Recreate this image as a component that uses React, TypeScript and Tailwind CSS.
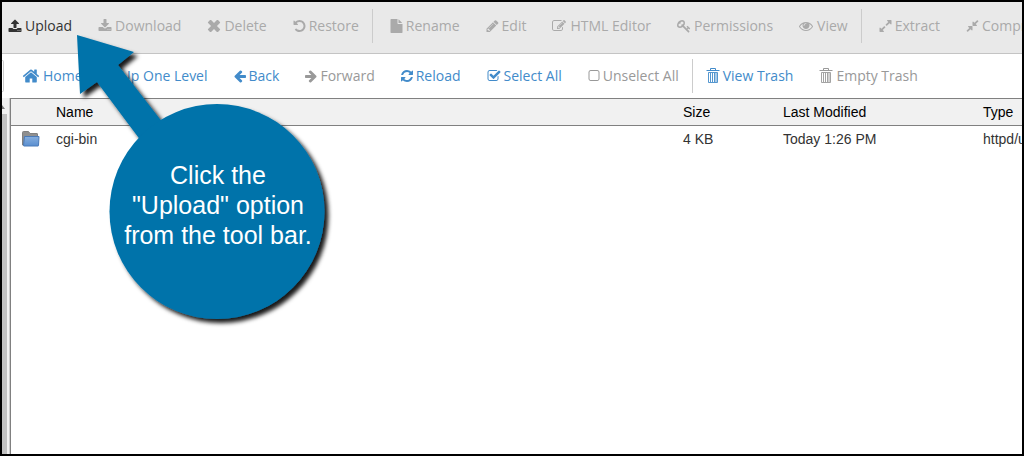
import type { ReactNode } from "react";
import clsx from "clsx";

// 1792-unit icon outlines
const icons = {
  upload:
    "M1344 1472q0-26-19-45t-45-19-45 19-19 45 19 45 45 19 45-19 19-45zm256 0q0-26-19-45t-45-19-45 19-19 45 19 45 45 19 45-19 19-45zm128-224v320q0 40-28 68t-68 28h-1472q-40 0-68-28t-28-68v-320q0-40 28-68t68-28h427q21 56 70.5 92t110.5 36h256q61 0 110.5-36t70.5-92h427q40 0 68 28t28 68zm-325-648q-17 40-59 40h-256v448q0 26-19 45t-45 19h-256q-26 0-45-19t-19-45v-448h-256q-42 0-59-40-17-39 14-69l448-448q18-19 45-19t45 19l448 448q31 30 14 69z",
  download:
    "M1344 1344q0-26-19-45t-45-19-45 19-19 45 19 45 45 19 45-19 19-45zm256 0q0-26-19-45t-45-19-45 19-19 45 19 45 45 19 45-19 19-45zm128-224v320q0 40-28 68t-68 28h-1472q-40 0-68-28t-28-68v-320q0-40 28-68t68-28h465l135 136q58 56 136 56t136-56l136-136h464q40 0 68 28t28 68zm-325-569q17 41-14 70l-448 448q-18 19-45 19t-45-19l-448-448q-31-29-14-70 17-39 59-39h256v-448q0-26 19-45t45-19h256q26 0 45 19t19 45v448h256q42 0 59 39z",
  times:
    "M1650 1406l-244 244q-28 28-68 28t-68-28l-374-374-374 374q-28 28-68 28t-68-28l-244-244q-28-28-28-68t28-68l374-374-374-374q-28-28-28-68t28-68l244-244q28-28 68-28t68 28l374 374 374-374q28-28 68-28t68 28l244 244q28 28 28 68t-28 68l-374 374 374 374q28 28 28 68t-28 68z",
  undo: "M1664 896q0 156-61 298t-164 245-245 164-298 61q-172 0-327-72.5t-264-204.5q-7-10-6.5-22.5t8.5-20.5l137-138q10-9 25-9 16 2 23 12 73 95 179 147t225 52q104 0 198.5-40.5t163.5-109.5 109.5-163.5 40.5-198.5-40.5-198.5-109.5-163.5-163.5-109.5-198.5-40.5q-98 0-188 35.5t-160 101.5l137 138q31 30 14 69-17 40-59 40h-448q-26 0-45-19t-19-45v-448q0-42 40-59 39-17 69 14l130 129q107-101 244.5-156.5t284.5-55.5q156 0 298 61t245 164 164 245 61 298z",
  file: "M1152 512v-472q22 14 36 28l408 408q14 14 28 36h-472zm-128 32q0 40 28 68t68 28h544v1056q0 40-28 68t-68 28h-1344q-40 0-68-28t-28-68v-1600q0-40 28-68t68-28h800v544z",
  pencil:
    "M491 1536l91-91-235-235-91 91v107h128v128h107zm523-928q0-22-22-22-10 0-17 7l-542 542q-7 7-7 17 0 22 22 22 10 0 17-7l542-542q7-7 7-17zm-54-192l416 416-832 832h-416v-416zm683 96q0 53-37 90l-166 166-416-416 166-165q36-38 90-38 53 0 91 38l235 234q37 39 37 91z",
  edit: "M888 1184l116-116-152-152-116 116v56h96v96h56zm440-720q-16-16-33 1l-350 350q-17 17-1 33t33-1l350-350q17-17 1-33zm80 594v190q0 119-84.5 203.5t-203.5 84.5h-832q-119 0-203.5-84.5t-84.5-203.5v-832q0-119 84.5-203.5t203.5-84.5h832q63 0 117 25 15 7 18 23 3 17-9 29l-49 49q-14 14-32 8-23-6-45-6h-832q-66 0-113 47t-47 113v832q0 66 47 113t113 47h832q66 0 113-47t47-113v-126q0-13 9-22l64-64q15-15 35-7t20 29zm-96-738l288 288-672 672h-288v-288zm444 132l-92 92-288-288 92-92q28-28 68-28t68 28l152 152q28 28 28 68t-28 68z",
  key: "M832 512q0-80-56-136t-136-56-136 56-56 136q0 42 19 83-41-19-83-19-80 0-136 56t-56 136 56 136 136 56 136-56 56-136q0-42-19-83 41 19 83 19 80 0 136-56t56-136zm851 704q0 17-49 66t-66 49q-9 0-28.5-16t-36.5-33-38.5-40-24.5-26l-96 96 220 220q28 28 28 68 0 42-39 81t-81 39q-40 0-68-28l-671-671q-176 131-365 131-163 0-265.5-102.5t-102.5-265.5q0-160 95-313t248-248 313-95q163 0 265.5 102.5t102.5 265.5q0 189-131 365l355 355 96-96q-3-3-26-24.5t-40-38.5-33-36.5-16-28.5q0-17 49-66t66-49q13 0 23 10 6 6 46 44.5t82 79.5 86.5 86 73 78 28.5 41z",
  eye: "M1664 960q-152-236-381-353 61 104 61 225 0 185-131.5 316.5t-316.5 131.5-316.5-131.5-131.5-316.5q0-121 61-225-229 117-381 353 133 205 333.5 326.5t434.5 121.5 434.5-121.5 333.5-326.5zm-720-384q0-20-14-34t-34-14q-125 0-214.5 89.5t-89.5 214.5q0 20 14 34t34 14 34-14 14-34q0-86 61-147t147-61q20 0 34-14t14-34zm848 384q0 34-20 69-140 230-376.5 368.5t-499.5 138.5-499.5-139-376.5-368q-20-35-20-69t20-69q140-229 376.5-368t499.5-139 499.5 139 376.5 368q20 35 20 69z",
  expand:
    "M883 1056q0 13-10 23l-332 332 144 144q19 19 19 45t-19 45-45 19h-448q-26 0-45-19t-19-45v-448q0-26 19-45t45-19 45 19l144 144 332-332q10-10 23-10t23 10l114 114q10 10 10 23zm781-864v448q0 26-19 45t-45 19-45-19l-144-144-332 332q-10 10-23 10t-23-10l-114-114q-10-10-10-23t10-23l332-332-144-144q-19-19-19-45t19-45 45-19h448q26 0 45 19t19 45z",
  compress:
    "M896 960v448q0 26-19 45t-45 19-45-19l-144-144-332 332q-10 10-23 10t-23-10l-114-114q-10-10-10-23t10-23l332-332-144-144q-19-19-19-45t19-45 45-19h448q26 0 45 19t19 45zm755-672q0 13-10 23l-332 332 144 144q19 19 19 45t-19 45-45 19h-448q-26 0-45-19t-19-45v-448q0-26 19-45t45-19 45 19l144 144 332-332q10-10 23-10t23 10l114 114q10 10 10 23z",
  home: "M1472 992v480q0 26-19 45t-45 19h-384v-384h-256v384h-384q-26 0-45-19t-19-45v-480q0-1 .5-3t.5-3l575-474 575 474q1 2 1 6zm223-69l-62 74q-8 9-21 11h-3q-13 0-21-7l-692-577-692 577q-12 8-24 7-13-2-21-11l-62-74q-8-10-7-23.5t11-21.5l719-599q32-26 76-26t76 26l244 204v-195q0-14 9-23t23-9h192q14 0 23 9t9 23v408l219 182q10 8 11 21.5t-7 23.5z",
  levelUp: "M700 256l-380 420h240v700h-340l240 260h640v-960h240z",
  left: "M1664 896v128q0 53-32.5 90.5t-84.5 37.5h-704l293 294q38 36 38 90t-38 90l-75 76q-37 37-90 37-52 0-91-37l-651-652q-37-37-37-90 0-52 37-91l651-650q38-38 91-38 52 0 90 38l75 74q38 38 38 91t-38 91l-293 293h704q52 0 84.5 37.5t32.5 90.5z",
  right:
    "M1600 960q0 54-37 91l-651 651q-39 37-91 37-51 0-90-37l-75-75q-38-38-38-91t38-91l293-293h-704q-52 0-84.5-37.5t-32.5-90.5v-128q0-53 32.5-90.5t84.5-37.5h704l-293-294q-38-36-38-90t38-90l75-75q38-38 90-38 53 0 91 38l651 651q37 35 37 90z",
  refresh:
    "M1639 1056q0 5-1 7-64 268-268 434.5t-478 166.5q-146 0-282.5-55t-243.5-157l-129 129q-19 19-45 19t-45-19-19-45v-448q0-26 19-45t45-19h448q26 0 45 19t19 45-19 45l-137 137q71 66 161 102t187 36q134 0 250-65t186-179q11-17 53-117 8-23 30-23h192q13 0 22.5 9.5t9.5 22.5zm25-800v448q0 26-19 45t-45 19h-448q-26 0-45-19t-19-45 19-45l138-138q-148-137-349-137-134 0-250 65t-186 179q-11 17-53 117-8 23-30 23h-199q-13 0-22.5-9.5t-9.5-22.5v-7q65-268 270-434.5t480-166.5q146 0 284 55.5t245 156.5l130-129q19-19 45-19t45 19 19 45z",
  checked:
    "M1472 930v318q0 119-84.5 203.5t-203.5 84.5h-832q-119 0-203.5-84.5t-84.5-203.5v-832q0-119 84.5-203.5t203.5-84.5h832q63 0 117 25 15 7 18 23 3 17-9 29l-49 49q-10 10-23 10-3 0-9-2-23-6-45-6h-832q-66 0-113 47t-47 113v832q0 66 47 113t113 47h832q66 0 113-47t47-113v-254q0-13 9-22l64-64q10-10 23-10 6 0 12 3 20 8 20 29zm231-489l-814 814q-24 24-57 24t-57-24l-430-430q-24-24-24-57t24-57l110-110q24-24 57-24t57 24l263 263 647-647q24-24 57-24t57 24l110 110q24 24 24 57t-24 57z",
  unchecked:
    "M1312 256h-832q-66 0-113 47t-47 113v832q0 66 47 113t113 47h832q66 0 113-47t47-113v-832q0-66-47-113t-113-47zm288 160v832q0 119-84.5 203.5t-203.5 84.5h-832q-119 0-203.5-84.5t-84.5-203.5v-832q0-119 84.5-203.5t203.5-84.5h832q119 0 203.5 84.5t84.5 203.5z",
};

type IconName = keyof typeof icons;

// glyphs advance by different widths, like an icon font
const iconSizes: Partial<Record<IconName, string>> = {
  home: "size-[18px]",
  levelUp: "h-[14px] w-[9px]",
  left: "h-[14px] w-[12px]",
  right: "h-[14px] w-[12px]",
  refresh: "h-[14px] w-[12px]",
  unchecked: "h-[14px] w-[12px]",
  undo: "h-[14px] w-[13px]",
  file: "h-[14px] w-[13px]",
  pencil: "h-[14px] w-[13px]",
  expand: "h-[14px] w-[13px]",
  compress: "h-[14px] w-[13px]",
  edit: "size-[14px] mr-px",
  eye: "size-[14px] mr-px",
};

function Icon({ name }: { name: IconName }) {
  return (
    <svg
      viewBox="0 0 1792 1792"
      preserveAspectRatio="xMidYMid slice"
      fill="currentColor"
      className={clsx("shrink-0", iconSizes[name] ?? "size-[14px]")}
    >
      <path d={icons[name]} />
    </svg>
  );
}

function TrashIcon() {
  return (
    <svg viewBox="0 0 14 16" fill="none" stroke="currentColor" className="h-4 w-[14px] shrink-0">
      <path d="M.5 2.5h13M4.500 2V.5h5V2" />
      <path d="M2.500 4.500h9v10h-9zM4.500 5v9M6.500 5v9M8.500 5v9M10 5v9" strokeWidth=".9" />
    </svg>
  );
}

function ToolButton({ icon, label, tone }: { icon: ReactNode; label: string; tone: "dark" | "muted" | "link" | "off" }) {
  return (
    <button
      disabled={tone === "muted" || tone === "off"}
      className={clsx(
        "flex shrink-0 items-center gap-[3px] px-[13px]",
        tone === "dark" && "text-[#333]",
        tone === "muted" && "text-[#aaa]",
        tone === "link" && "text-[#428bca]",
        tone === "off" && "text-[#999]"
      )}
    >
      {icon}
      {label}
    </button>
  );
}

function Divider() {
  return <div className="h-[34px] w-px shrink-0 bg-[#ccc]" />;
}

const fileActions: [IconName, string][][] = [
  [["upload", "Upload"], ["download", "Download"], ["times", "Delete"], ["undo", "Restore"]],
  [["file", "Rename"], ["pencil", "Edit"], ["edit", "HTML Editor"], ["key", "Permissions"], ["eye", "View"]],
  [["expand", "Extract"], ["compress", "Compress"]],
];

const navActions: [IconName, string][] = [
  ["home", "Home"],
  ["levelUp", "Up One Level"],
  ["left", "Back"],
  ["right", "Forward"],
  ["refresh", "Reload"],
  ["checked", "Select All"],
  ["unchecked", "Unselect All"],
];

function FolderIcon() {
  return (
    <svg viewBox="0 0 18 16" className="h-4 w-[18px]">
      <defs>
        <linearGradient id="folder" x1="0" y1="0" x2="0" y2="1">
          <stop offset="0" stopColor="#86aede" />
          <stop offset="1" stopColor="#5a8fd0" />
        </linearGradient>
      </defs>
      <path d="M.5 14V1.500Q.5.5 1.500.5h5l1.500 2h7q.5 0 .5.5v11z" fill="#8f8f8f" stroke="#808080" />
      <path d="M2.500 5.500h14.500l-.5 9q0 .5-.5.5H2q-.5 0-.5-.5z" fill="url(#folder)" stroke="#4a7ab8" />
    </svg>
  );
}

function Callout() {
  return (
    <div className="absolute top-[30px] left-[72px] h-[300px] w-[262px]">
      <svg viewBox="74 32 262 300" className="size-full overflow-visible fill-[#0073aa]">
        <defs>
          <filter id="callout-shadow" x="-10%" y="-10%" width="120%" height="120%">
            <feDropShadow dx="4" dy="4" stdDeviation="2" floodColor="#000" floodOpacity="0.9" />
          </filter>
        </defs>
        <g filter="url(#callout-shadow)">
          <path d="M77 35L134 52L118 65L170 132L150 153L97 82L80 94z" />
          <circle cx="217" cy="211.500" r="107.500" />
        </g>
      </svg>
      <p className="absolute inset-x-0 top-32 pl-[26px] text-center font-['Liberation_Sans',Arial,sans-serif] text-[25px] leading-[30px] whitespace-nowrap text-white">
        Click the
        <br />
        "Upload" option
        <br />
        from the tool bar.
      </p>
    </div>
  );
}

export default function App() {
  return (
    <div className="relative flex min-h-screen flex-col overflow-hidden border-2 border-black bg-white font-['Open_Sans',sans-serif] text-sm whitespace-nowrap">
      <div className="flex h-[52px] items-center overflow-hidden border-b border-[#c4c4c4] bg-[#e9e9e9] pb-[3px]">
        {fileActions.map((group, i) => (
          <div key={i} className={clsx("flex shrink-0 items-center", i === 0 ? "-ml-[7px]" : "pl-1")}>
            {group.map(([icon, label]) => (
              <ToolButton key={icon} icon={<Icon name={icon} />} label={label} tone={icon === "upload" ? "dark" : "muted"} />
            ))}
            {i < 2 && <Divider />}
          </div>
        ))}
      </div>

      <div className="flex h-11 items-center overflow-hidden">
        {/* right end of the path box */}
        <div className="h-8 w-[2px] shrink-0 rounded-r-sm border border-l-0 border-[#ccc]" />
        <div className="flex items-center pl-[5px]">
          {navActions.map(([icon, label]) => (
            <ToolButton
              key={icon}
              icon={<Icon name={icon} />}
              label={label}
              tone={icon === "right" || icon === "unchecked" ? "off" : "link"}
            />
          ))}
          <Divider />
          <ToolButton icon={<TrashIcon />} label="View Trash" tone="link" />
          <ToolButton icon={<TrashIcon />} label="Empty Trash" tone="off" />
        </div>
      </div>

      <div className="flex grow">
        {/* tree scrollbar */}
        <div className="flex w-[8px] shrink-0 flex-col border-r border-[#ccc] bg-[#f1f1f1]">
          <svg viewBox="0 0 5 16" className="h-4 w-[5px] fill-[#777]">
            <path d="M0 7L3 11H0z" />
          </svg>
          <div className="w-[5px] grow bg-[#c1c1c1]" />
        </div>
        <div className="min-w-0 grow overflow-hidden border-t border-l border-[#808080]">
          <table className="w-full table-fixed font-['Liberation_Sans',Arial,sans-serif] text-left text-[#333]">
            <thead className="border-b border-[#808080] bg-[#f1f1f1] text-black">
              <tr className="h-[26px] *:font-normal">
                <th className="w-[45px]" />
                <th>Name</th>
                <th className="w-[100px]">Size</th>
                <th className="w-[200px]">Last Modified</th>
                <th className="w-[39px]">Type</th>
              </tr>
            </thead>
            <tbody>
              <tr className="h-[27px]">
                <td className="pl-[11px]">
                  <FolderIcon />
                </td>
                <td>cgi-bin</td>
                <td>4 KB</td>
                <td>Today 1:26 PM</td>
                <td>httpd/unix-directory</td>
              </tr>
            </tbody>
          </table>
        </div>
      </div>

      <Callout />
    </div>
  );
}
